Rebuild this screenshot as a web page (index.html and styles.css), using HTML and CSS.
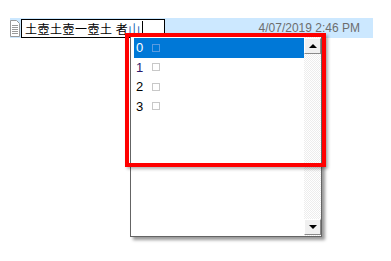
FILE: index.html
```html
<!DOCTYPE html>
<html lang="en">
<head>
    <meta charset="UTF-8">
    <meta name="viewport" content="width=device-width, initial-scale=1.0">
    <title>Document</title>
    <link rel="stylesheet" href="styles.css">
</head>
<body>
    <div class="row">
        <svg class="doc" width="10" height="17" viewBox="0 0 10 17">
            <path d="M0.5 0.5 H6.5 L9.5 3.5 V16.5 H0.5 Z" fill="#fff" stroke="#9a9a9a"/>
            <path d="M2 5.5 H8 M2 7.5 H8 M2 9.5 H8 M2 11.5 H8 M2 13.5 H8" stroke="#9a9a9a"/>
        </svg>
        <div class="edit">土壺土壺一壺土 者<span class="last">山</span><span class="caret"></span></div>
        <div class="date">4/07/2019 2:46 PM</div>
    </div>

    <div class="popup">
        <div class="list">
            <div class="item sel"><span class="num">0</span><span class="box"></span></div>
            <div class="item"><span class="num one">1</span><span class="box"></span></div>
            <div class="item"><span class="num">2</span><span class="box"></span></div>
            <div class="item"><span class="num">3</span><span class="box"></span></div>
        </div>
        <div class="scroll">
            <div class="btn"><span class="up"></span></div>
            <div class="track"></div>
            <div class="btn"><span class="down"></span></div>
        </div>
    </div>

    <div class="mark"></div>
</body>
</html>
```

FILE: styles.css
```css
body{
    margin: 0;
    background: #fff;
    font-family: "Liberation Sans", "DejaVu Sans", "Noto Sans CJK JP", sans-serif;
}

.row {
    margin-top: 18px;
    margin-left: 10px;
    width: 363px;
    height: 20px;
    background: #cce8ff;
    display: flex;
    align-items: center;
}

.doc {
    display: block;
    margin-top: 1px;
}

.edit {
    margin-left: 1px;
    width: 139px;
    height: 17px;
    border: 1px solid #000;
    background: #fff;
    font-family: "Noto Sans CJK JP", sans-serif;
    font-size: 12px;
    letter-spacing: 0.5px;
    line-height: 17px;
    padding-left: 3px;
    box-sizing: content-box;
    display: flex;
    align-items: center;
    white-space: pre;
    color: #000;
    overflow: hidden;
}

.last {
    color: #1a5fb4;
}

.caret {
    flex: none;
    width: 1px;
    height: 15px;
    background: #000;
    margin-left: 1px;
}

.date {
    margin-left: auto;
    padding-right: 13px;
    color: #6d6d6d;
    font-size: 12px;
}

.popup {
    position: absolute;
    left: 130px;
    top: 36px;
    width: 190px;
    height: 199px;
    border: 1px solid #646464;
    background: #fff;
    display: flex;
    box-shadow: 3px 3px 3px rgba(0, 0, 0, 0.4);
}

.list {
    flex: 1;
    padding: 1px 0 0 3px;
}

.item {
    height: 19.5px;
    display: flex;
    align-items: center;
    font-size: 13px;
    color: #000;
    padding-left: 2px;
}

.item.sel {
    background: #0078d7;
    color: #fff;
}

.num {
    width: 16px;
}

.one {
    color: #2a1a6e;
}

.box {
    width: 6px;
    height: 6px;
    border: 1px solid #c8c8c8;
}

.sel .box {
    border-color: #5a9be0;
}

.scroll {
    width: 17px;
    display: flex;
    flex-direction: column;
    background: repeating-conic-gradient(#ededed 0 25%, #fff 0 50%) 0 0 / 2px 2px;
}

.track {
    flex: 1;
}

.btn {
    height: 14px;
    background: #f0f0f0;
    border: 1px solid;
    border-color: #fff #8a8a8a #8a8a8a #fff;
    display: flex;
    align-items: center;
    justify-content: center;
    margin-top: 1px;
}

.btn:last-child {
    margin-bottom: 1px;
}

.up {
    border-left: 4px solid transparent;
    border-right: 4px solid transparent;
    border-bottom: 4px solid #000;
}

.down {
    border-left: 4px solid transparent;
    border-right: 4px solid transparent;
    border-top: 4px solid #000;
}

.mark {
    position: absolute;
    left: 125px;
    top: 33px;
    width: 193px;
    height: 126px;
    border: 4px solid #ff0000;
    box-shadow: 2px 2px 3px rgba(0, 0, 0, 0.3);
}
```
